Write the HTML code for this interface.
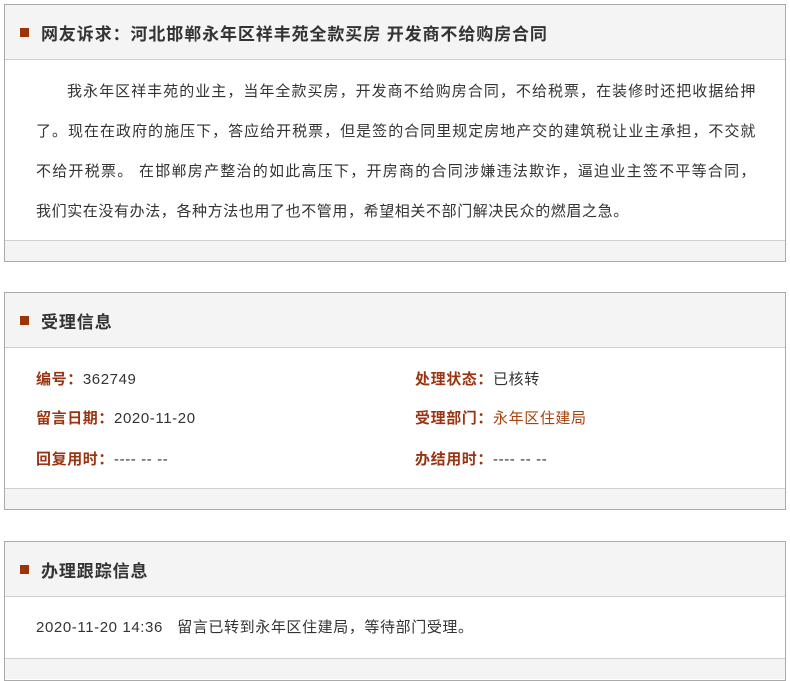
<!DOCTYPE html>
<html><head><meta charset="utf-8"><style>
*{margin:0;padding:0;box-sizing:border-box}
body{width:790px;height:661px;overflow:hidden;background:#fff;font-family:"Liberation Sans","Microsoft YaHei","Noto Sans CJK SC",sans-serif;font-size:15px;color:#333;letter-spacing:0.6px}
.box{position:absolute;left:4px;width:782px;border:1px solid #aaa;background:#fff}
.hd{height:55px;background:#f4f4f4;border-bottom:1px solid #d0d0d0;position:relative}
.hd i{position:absolute;left:15px;top:23px;width:9px;height:9px;background:#9e3306}
.hd b{position:absolute;left:36px;top:15px;font-size:17px;color:#333;font-weight:bold;letter-spacing:0.9px;white-space:nowrap}
.ft{height:21px;background:#f4f4f4;border-top:1px solid #d0d0d0}
.p{padding:12px 0 13px 31px;line-height:40px;white-space:nowrap}
.p div{width:720px;text-align:justify;text-align-last:justify}
.p div.last{text-align-last:left}
.row{position:absolute;height:20px;line-height:20px;white-space:nowrap}
.l{color:#9a3412;font-weight:bold}
</style></head><body>
<div class="box" style="top:4px;height:258px">
<div class="hd"><i></i><b>网友诉求：河北邯郸永年区祥丰苑全款买房 开发商不给购房合同</b></div>
<div class="p" style="height:180px"><div style="padding-left:31px">我永年区祥丰苑的业主，当年全款买房，开发商不给购房合同，不给税票，在装修时还把收据给押</div><div>了。现在在政府的施压下，答应给开税票，但是签的合同里规定房地产交的建筑税让业主承担，不交就</div><div>不给开税票。 在邯郸房产整治的如此高压下，开房商的合同涉嫌违法欺诈，逼迫业主签不平等合同，</div><div class="last">我们实在没有办法，各种方法也用了也不管用，希望相关不部门解决民众的燃眉之急。</div></div>
<div class="ft"></div>
</div>
<div class="box" style="top:292px;height:218px">
<div class="hd"><i></i><b>受理信息</b></div>
<div style="position:relative;height:140px">
<div class="row" style="left:31px;top:22px"><span class="l">编号：</span>362749</div>
<div class="row" style="left:31px;top:61px"><span class="l">留言日期：</span>2020-11-20</div>
<div class="row" style="left:31px;top:102px"><span class="l">回复用时：</span>---- -- --</div>
<div class="row" style="left:410px;top:22px"><span class="l">处理状态：</span>已核转</div>
<div class="row" style="left:410px;top:61px"><span class="l">受理部门：</span><span style="color:#a8420e">永年区住建局</span></div>
<div class="row" style="left:410px;top:102px"><span class="l">办结用时：</span>---- -- --</div>
</div>
<div class="ft"></div>
</div>
<div class="box" style="top:541px;height:140px">
<div class="hd"><i></i><b>办理跟踪信息</b></div>
<div style="position:relative;height:61px">
<div class="row" style="left:31px;top:21px">2020-11-20 14:36&nbsp;&nbsp;&nbsp;留言已转到永年区住建局，等待部门受理。</div>
</div>
<div class="ft"></div>
</div>
</body></html>
